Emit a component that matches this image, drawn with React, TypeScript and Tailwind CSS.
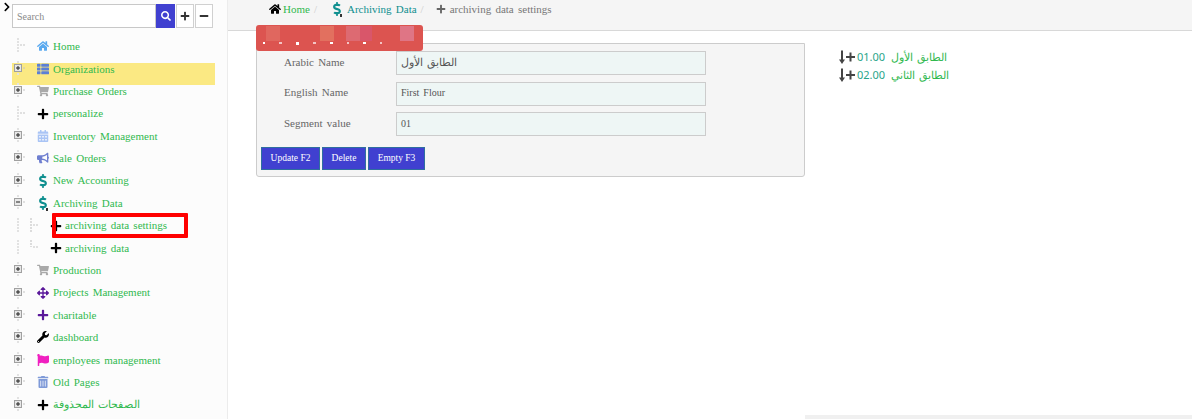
import type { ReactNode } from 'react'
import {
  FaArrowsAlt,
  FaBullhorn,
  FaCalendarAlt,
  FaChevronRight,
  FaDollarSign,
  FaFlag,
  FaHome,
  FaMinus,
  FaPlus,
  FaSearch,
  FaShoppingCart,
  FaThList,
  FaTrashAlt,
  FaWrench,
} from 'react-icons/fa'

type TreeKind = 'leaf' | 'plus' | 'minus'

function TreeNode({ kind }: { kind: TreeKind }) {
  return (
    <svg width="30" height="22" viewBox="0 0 30 22" className="shrink-0">
      <path d="M18 3V18" stroke="#e2e2e2" strokeWidth="2" strokeDasharray="2 1" />
      <path d="M20 10H26" stroke="#c4c4c4" strokeWidth="1" strokeDasharray="2 1" />
      {kind !== 'leaf' && (
        <>
          <rect x="14.5" y="6.5" width="7" height="7" fill="#e8e8e8" stroke="#a0a0a0" />
          <path d="M16 10H20" stroke="#222" />
          {kind === 'plus' && <path d="M18 8V12" stroke="#222" />}
        </>
      )}
    </svg>
  )
}

function ChildLines({ last }: { last?: boolean }) {
  return (
    <svg width="43" height="22" viewBox="0 0 43 22" className="shrink-0">
      <path d="M18 3V18" stroke="#e2e2e2" strokeWidth="2" strokeDasharray="2 1" />
      <path d={last ? 'M31 3V10' : 'M31 3V18'} stroke="#dcdcdc" strokeWidth="2" strokeDasharray="2 1" />
      <path d="M33 10H38" stroke="#c4c4c4" strokeDasharray="2 1" />
    </svg>
  )
}

function Dollar({ mark }: { mark?: boolean }) {
  return (
    <span className="relative flex items-center">
      <FaDollarSign className="text-[14px] text-[#0f8f8f]" />
      {mark && <span className="absolute top-[12px] left-[10px] h-[3px] w-[2px] bg-[#333333]" />}
    </span>
  )
}

function TreeRow({ kind, icon, label, highlight }: { kind: TreeKind; icon: ReactNode; label: string; highlight?: boolean }) {
  return (
    <div className="relative flex h-[22.4px] items-center">
      {highlight && <div className="absolute top-[5px] right-[12px] left-[12px] h-[22px] bg-[#fbe983]" />}
      <div className="relative flex items-center">
        <TreeNode kind={kind} />
        <span className="ml-[7px] flex w-[12px] shrink-0 items-center justify-center text-[12px]">{icon}</span>
        <span className="ml-[4px] whitespace-nowrap text-[#31b94f]">{label}</span>
      </div>
    </div>
  )
}

function ChildRow({ label, last }: { label: string; last?: boolean }) {
  return (
    <div className="flex h-[22.4px] items-center">
      <ChildLines last={last} />
      <span className="ml-[7px] flex w-[12px] shrink-0 items-center justify-center text-[12px] text-black">
        <FaPlus />
      </span>
      <span className="ml-[3px] whitespace-nowrap text-[#31b94f]">{label}</span>
    </div>
  )
}

function FormRow({ label, value, arabic, small }: { label: string; value: string; arabic?: boolean; small?: boolean }) {
  return (
    <div className="flex h-[24px] items-center">
      <label className="w-[139px] shrink-0 pb-[2px] pl-[27px] text-[#666666]">{label}</label>
      <div
        className={`flex h-[24px] w-[310px] items-center border border-[#cccccc] bg-[#eef6f5] px-[4px] pb-[2px] text-[#555555] ${arabic ? "font-['Noto_Sans',serif] text-[11px]" : small ? 'text-[10px] text-[#333333]' : ''}`}
      >
        {value}
      </div>
    </div>
  )
}

function SortIcon() {
  return (
    <svg width="18" height="15" viewBox="0 0 18 15" className="shrink-0">
      <path d="M4 0.5V11" stroke="#444" strokeWidth="2" />
      <path d="M1 9.5L4 14L7 9.5Z" fill="#444" />
      <path d="M8 7H17M12.5 2.5V11.5" stroke="#444" strokeWidth="2" />
    </svg>
  )
}

export default function App() {
  return (
    <div className="relative flex h-[419px] w-[1192px] overflow-hidden bg-white font-['Liberation_Serif',serif] text-[11px] [word-spacing:1.5px]">
      <aside className="relative h-[419px] w-[228px] shrink-0 border-r border-[#ececec] bg-[#fcfcfc]">
        <FaChevronRight className="absolute top-[2px] left-[2px] text-[10px] text-black" />
        <div className="mt-[4px] ml-[12px] flex h-[24px] w-[202px]">
          <div className="flex h-[24px] w-[144px] items-center border border-[#c8c8c8] bg-white pl-[4px] text-[10px] text-[#8a8a8a]">
            Search
          </div>
          <button className="flex h-[24px] w-[19px] items-center justify-center bg-[#4040d0] text-[10px] text-white">
            <FaSearch />
          </button>
          <button className="ml-px flex h-[24px] w-[18px] items-center justify-center border border-[#d0d0d0] bg-white text-[10px] text-[#333333]">
            <FaPlus />
          </button>
          <button className="ml-px flex h-[24px] w-[18px] items-center justify-center border border-[#d0d0d0] bg-white text-[10px] text-[#333333]">
            <FaMinus />
          </button>
        </div>
        <div className="mt-[7.2px]">
          <TreeRow kind="leaf" icon={<FaHome className="text-[#5aa9ef]" />} label="Home" />
          <TreeRow kind="plus" icon={<FaThList className="text-[#5b7fd6]" />} label="Organizations" highlight />
          <TreeRow kind="plus" icon={<FaShoppingCart className="text-[#a9a9a9]" />} label="Purchase Orders" />
          <TreeRow kind="leaf" icon={<FaPlus className="text-black" />} label="personalize" />
          <TreeRow kind="plus" icon={<FaCalendarAlt className="text-[#a9c4f5]" />} label="Inventory Management" />
          <TreeRow kind="plus" icon={<FaBullhorn className="text-[#6f7fd0]" />} label="Sale Orders" />
          <TreeRow kind="plus" icon={<Dollar />} label="New Accounting" />
          <TreeRow kind="minus" icon={<Dollar mark />} label="Archiving Data" />
          <ChildRow label="archiving data settings" />
          <ChildRow label="archiving data" last />
          <TreeRow kind="plus" icon={<FaShoppingCart className="text-[#a9a9a9]" />} label="Production" />
          <TreeRow kind="plus" icon={<FaArrowsAlt className="text-[#5a189a]" />} label="Projects Management" />
          <TreeRow kind="plus" icon={<FaPlus className="text-[#5a189a]" />} label="charitable" />
          <TreeRow kind="plus" icon={<FaWrench className="text-black" />} label="dashboard" />
          <TreeRow kind="plus" icon={<FaFlag className="text-[#f020c0]" />} label="employees management" />
          <TreeRow kind="plus" icon={<FaTrashAlt className="text-[#7f9ad8]" />} label="Old Pages" />
          <TreeRow kind="plus" icon={<FaPlus className="text-black" />} label="الصفحات المحذوفة" />
        </div>
        <div className="absolute top-[213px] left-[52px] h-[25px] w-[136px] rounded-[1px] border-[4px] border-[#ff0000]" />
      </aside>

      <main className="flex h-[419px] min-w-0 flex-1 flex-col">
        <div className="flex h-[31px] shrink-0 items-center border-b border-[#d8d8d8] bg-[#f5f5f5] pb-[12px] pl-[41px]">
          <FaHome className="text-[12px] text-black" />
          <span className="ml-[2px] text-[#31b94f]">Home</span>
          <span className="ml-[4px] text-[#cccccc]">/</span>
          <span className="ml-[13px]">
            <Dollar mark />
          </span>
          <span className="ml-[3px] text-[#0f8f8f]">Archiving Data</span>
          <span className="ml-[4px] text-[#cccccc]">/</span>
          <FaPlus className="ml-[12px] text-[10px] text-[#666666]" />
          <span className="ml-[4px] text-[#777777]">archiving data settings</span>
        </div>

        <div className="flex pt-[12px] pl-[28px]">
          <section className="flex h-[134px] w-[549px] shrink-0 flex-col rounded-b-[3px] border border-[#cccccc] bg-[#f5f5f5] pt-[7px]">
            <div className="flex flex-col gap-[6.5px]">
              <FormRow label="Arabic Name" value="الطابق الأول" arabic />
              <FormRow label="English Name" value="First Flour" small />
              <FormRow label="Segment value" value="01" small />
            </div>
            <div className="mt-[11px] flex gap-[2px] pl-[4px]">
              <button className="h-[23px] w-[59px] border border-[#2f6f9f] bg-[#4040d0] text-[9.5px] text-white">Update F2</button>
              <button className="h-[23px] w-[44px] border border-[#2f6f9f] bg-[#4040d0] text-[9.5px] text-white">Delete</button>
              <button className="h-[23px] w-[57px] border border-[#2f6f9f] bg-[#4040d0] text-[9.5px] text-white">Empty F3</button>
            </div>
          </section>

          <div className="ml-[33px] pt-[5px] font-['Noto_Sans',sans-serif] text-[11px] text-[#31b94f]">
            <div className="flex h-[18px] items-center gap-[1px]">
              <SortIcon />
              <span className="text-[#2aa58a]">01.00</span>
              <span className="ml-[5px]">الطابق الأول</span>
            </div>
            <div className="flex h-[18px] items-center gap-[1px]">
              <SortIcon />
              <span className="text-[#2aa58a]">02.00</span>
              <span className="ml-[5px]">الطابق الثاني</span>
            </div>
          </div>
        </div>

        <div className="mt-auto h-[4px] w-[387px] self-end bg-[#f0f0f0]" />
      </main>

      <div className="absolute top-[25px] left-[256px] h-[26px] w-[167px] overflow-hidden rounded-[3px] bg-[#dc5450]">
        <div className="flex h-[16px] pt-[1px]">
          <div className="ml-[10px] h-[15px] w-[14px] bg-[#e0675f]" />
          <div className="ml-[40px] h-[15px] w-[14px] bg-[#e2705f]" />
          <div className="ml-[12px] h-[15px] w-[14px] bg-[#dd6a72]" />
          <div className="h-[15px] w-[12px] bg-[#d9566a]" />
          <div className="ml-[28px] h-[15px] w-[14px] bg-[#df7585]" />
        </div>
        <div className="mt-[1px] flex gap-[14px] pl-[7px]">
          <div className="h-[2px] w-[2px] bg-white" />
          <div className="h-[2px] w-[3px] bg-[#f3c4c4]" />
          <div className="h-[3px] w-[3px] bg-white" />
          <div className="h-[2px] w-[3px] bg-[#f3c4c4]" />
          <div className="h-[2px] w-[3px] bg-white" />
          <div className="h-[2px] w-[2px] bg-[#f3c4c4]" />
          <div className="h-[2px] w-[3px] bg-white" />
          <div className="h-[2px] w-[2px] bg-[#f3c4c4]" />
        </div>
      </div>
    </div>
  )
}
